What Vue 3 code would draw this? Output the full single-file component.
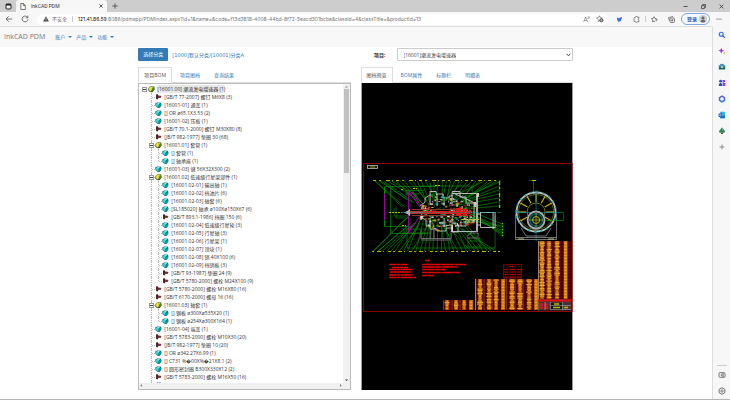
<script setup>
import { ref } from 'vue'

const menus = ['账户', '产品', '功能']
const leftTabs = ['项目BOM', '项目图档', '查询结果']
const rightTabs = ['图档预览', 'BOM属性', '标题栏', '明细表']
const leftTab = ref(0)
const rightTab = ref(0)
const project = ref('16001')

// kind: a = assembly, p = part, s = standard part
const source = [
  [0, 'a', '[16001.00] 潮流发电增速器 (1)'],
  [1, 's', '[GB/T 77-2007] 螺钉 M6X8 (3)'],
  [1, 'p', '[16001-01] 通盖 (1)'],
  [1, 'p', '[] OR ø65.1X3.53 (2)'],
  [1, 'p', '[16001-02] 压板 (1)'],
  [1, 's', '[GB/T 70.1-2000] 螺钉 M30X80 (8)'],
  [1, 's', '[JB/T 982-1977] 垫圈 30 (68)'],
  [1, 'a', '[16001.01] 套管 (1)'],
  [2, 'p', '[] 套管 (1)'],
  [2, 'p', '[] 轴承座 (1)'],
  [1, 'p', '[16001-03] 键 56X32X300 (2)'],
  [1, 'a', '[16001.02] 低速级行星架部件 (1)'],
  [2, 'p', '[16001.02-01] 输出轴 (1)'],
  [2, 'p', '[16001.02-02] 挡油片 (6)'],
  [2, 'p', '[16001.02-03] 轴套 (6)'],
  [2, 'p', '[SL185020] 轴承 ø100Xø150X67 (6)'],
  [2, 's', '[GB/T 893.1-1986] 挡圈 150 (6)'],
  [2, 'p', '[16001.02-04] 低速级行星轮 (3)'],
  [2, 'p', '[16001.02-05] 行星轴 (3)'],
  [2, 'p', '[16001.02-06] 行星架 (1)'],
  [2, 'p', '[16001.02-07] 顶块 (1)'],
  [2, 'p', '[16001.02-08] 销 40X100 (6)'],
  [2, 'p', '[16001.02-09] 挡销板 (3)'],
  [2, 's', '[GB/T 93-1987] 垫圈 24 (9)'],
  [2, 's', '[GB/T 5780-2000] 螺栓 M24X100 (9)'],
  [1, 's', '[GB/T 5780-2000] 螺栓 M16X80 (16)'],
  [1, 's', '[GB/T 6170-2000] 螺母 16 (16)'],
  [1, 'a', '[16001.03] 轴套 (1)'],
  [2, 'p', '[] 钢板 ø300Xø535X20 (1)'],
  [2, 'p', '[] 钢板 ø254Xø300X164 (1)'],
  [1, 'p', '[16001-04] 端盖 (1)'],
  [1, 's', '[GB/T 5783-2000] 螺栓 M10X30 (20)'],
  [1, 's', '[JB/T 982-1977] 垫圈 10 (20)'],
  [1, 'p', '[] OR ø342.27X6.99 (1)'],
  [1, 'p', '[] C731 %\uFFFD00X%\uFFFD21X8.1 (2)'],
  [1, 'p', '[] 圆形密封圈 B300X330X12 (2)'],
  [1, 's', '[GB/T 5783-2000] 螺栓 M16X50 (16)'],
  [1, 'p', '[] OR ø380X ø400X7.0 (2)'],
]
const rows = source.map(([depth, kind, text], i) => ({
  depth, kind, text,
  last: depth === 2 && (source[i + 1]?.[0] ?? 0) < 2,
}))

// Deterministic noise for the drawing's fine detail
let seed = 7
const rnd = () => ((seed = (seed * 16807) % 2147483647) / 2147483647)
const between = (a, b) => +(a + rnd() * (b - a)).toFixed(1)

const fan = []
for (let i = 0; i < 30; i++) {
  const x = 375 + i * 4.2
  fan.push(`M${x} 181L${(436 + (x - 436) * 0.45 + between(-4, 4)).toFixed(1)} ${between(196, 208)}`)
  fan.push(`M${x - 1} 251L${(436 + (x - 436) * 0.48 + between(-4, 4)).toFixed(1)} ${between(216, 230)}`)
}
for (let i = 0; i < 7; i++) {
  fan.push(`M499 ${182 + i * 4}L${between(452, 468)} ${198 + i * 2}`)
  fan.push(`M502 ${224 + i * 2}L${between(462, 474)} ${between(212, 220)}`)
}
const fanPath = fan.join('')

const bits = []
const bitColors = ['#e8e8e8', '#ff3030', '#d8d8d8', '#20b020', '#c02020', '#18b8b8', '#b07830', '#ffffff', '#d8d020']
for (let i = 0; i < 260; i++) {
  const x = between(419, 474)
  const spread = x < 428 ? 7 : x < 445 ? 18 : x < 462 ? 14 : 12
  bits.push({ x, y: between(212 - spread, 212 + spread), w: between(1, 3), h: between(0.6, 2), c: bitColors[i % 9] })
}

const tables = [
  { x: 538, y: 241, w: 33, h: 58, cols: [3, 10, 18, 26.5] },
  { x: 475, y: 279, w: 31, h: 31, cols: [4, 13, 20, 27] },
  { x: 506, y: 279, w: 31, h: 31, cols: [5, 13, 22, 29] },
  { x: 443, y: 300, w: 31, h: 10, cols: [3, 12, 20, 27] },
]
for (const t of tables) {
  t.marks = []
  t.cols.forEach((c, k) => {
    for (let y = 0.6; y < t.h - 1; y += 1.5) {
      const w = k === 3 ? 3 : between(1, 6)
      t.marks.push({ x: t.x + c + 1 - w / 2, y: t.y + y, w })
    }
  })
  t.lines = Array.from({ length: Math.floor(t.h / 3) }, (_, i) => `M${t.x} ${t.y + 2 + i * 3}h${t.w}`).join('')
}

const spokes = Array.from({ length: 12 }, (_, i) => {
  const a = (i * Math.PI) / 6
  const p = (r) => `${(536 + r * Math.cos(a)).toFixed(1)} ${(212 + r * Math.sin(a)).toFixed(1)}`
  return { d: `M${p(10)}L${p(18)}` }
}).filter((_, i) => i < 2 || i > 4)
</script>

<template>
  <div class="browser">
    <header class="titlebar">
      <button class="bare workspace" aria-label="工作区">
        <svg width="7" height="7" viewBox="0 0 7 7"><rect x="1" y="1" width="5" height="5" rx="1" fill="#eee" stroke="#222" /><path d="M1 1.7h5" stroke="#222" stroke-width="1.6" /></svg>
      </button>
      <div class="page-tab">
        <svg width="6" height="7" viewBox="0 0 6 7"><path d="M.8.5h2.6l1.9 2v4H.8zM3.3.6v2h2" fill="#fff" stroke="#444" stroke-width=".7" /></svg>
        <span class="page-title">InkCAD PDM</span>
        <button class="bare" aria-label="关闭标签页"><svg width="4" height="4" viewBox="0 0 4 4"><path d="M.4.4l3.2 3.2M3.6.4L.4 3.6" stroke="#333" stroke-width=".8" /></svg></button>
      </div>
      <button class="bare new-tab" aria-label="新建标签页"><svg width="6" height="6" viewBox="0 0 6 6"><path d="M3 .3v5.4M.3 3h5.4" stroke="#444" stroke-width=".8" /></svg></button>
      <div class="window-buttons">
        <button class="bare" aria-label="最小化"><svg width="5" height="5" viewBox="0 0 5 5"><path d="M.5 2.5h4" stroke="#333" stroke-width=".8" /></svg></button>
        <button class="bare" aria-label="还原"><svg width="5" height="5" viewBox="0 0 5 5"><path d="M.5 1.6h2.9v2.9H.5zM1.6 1.4V.5h2.9v2.9h-.9" fill="none" stroke="#333" stroke-width=".7" /></svg></button>
        <button class="bare" aria-label="关闭"><svg width="5" height="5" viewBox="0 0 5 5"><path d="M.6.6l3.8 3.8M4.4.6L.6 4.4" stroke="#333" stroke-width=".8" /></svg></button>
      </div>
    </header>

    <div class="toolbar">
      <button class="bare" aria-label="后退"><svg width="8" height="8" viewBox="0 0 8 8"><path d="M7.2 4H1M3.7 1.3L1 4l2.7 2.7" fill="none" stroke="#555" stroke-width=".8" /></svg></button>
      <button class="bare" aria-label="刷新"><svg width="8" height="8" viewBox="0 0 8 8"><path d="M6.6 2.6A2.9 2.9 0 1 0 6.9 4.4M6.8.8v2h-2" fill="none" stroke="#555" stroke-width=".8" /></svg></button>
      <div class="address">
        <svg width="6" height="6" viewBox="0 0 6 6"><path d="M3 .3L5.9 5.6H.1z" fill="#444" /><path d="M3 2v2M3 4.4v.7" stroke="#fff" stroke-width=".6" /></svg>
        <span class="insecure">不安全</span>
        <i class="bar"></i>
        <span class="url"><b>121.41.86.59</b>:8086/pdmapp/PDMIndex.aspx?id=1&amp;name=&amp;code=f13d3818-4008-44bd-8f72-5eacd301bcbe&amp;classId=4&amp;classTitle=&amp;productId=13</span>
        <button class="bare" aria-label="大声朗读"><svg width="7" height="7" viewBox="0 0 7 7"><path d="M.6 6L2.7 1 4.8 6M1.3 4.4h2.8M4.8.6q1 .9 0 2M5.7.2q1.3 1.3 0 2.7" fill="none" stroke="#666" stroke-width=".6" /></svg></button>
        <button class="bare" aria-label="收藏"><svg width="8" height="8" viewBox="0 0 8 8"><path d="M3.5.8l.9 1.9 2.1.3M2.6 4.500l-.4 2 1.5-.8M2.6 2.7L.5 3 2 4.5M3.5.8L2.6 2.7" fill="none" stroke="#555" stroke-width=".6" /><circle cx="5.4" cy="5.3" r="2" fill="#555" /><path d="M5.4 4.2v2.2M4.3 5.3h2.2" stroke="#fff" stroke-width=".5" /></svg></button>
      </div>
      <div class="tools">
        <button class="bare" aria-label="扩展"><svg width="7" height="7" viewBox="0 0 7 7"><path d="M.8 1.4L3 2.3 5.9.8 4.8 5 2.6 5.9 1.2 4z" fill="#3b6cf6" /><path d="M4.3 1.8l1.8-.6-1 1.8z" fill="#a04df0" /></svg></button>
        <button class="bare" aria-label="插件"><svg width="7" height="7" viewBox="0 0 7 7"><path d="M6 2.5V1.3H4.5a1 1 0 0 0-2 0H2A1 1 0 0 0 1 2.3v2.4a1 1 0 0 0 1 1h.6a1 1 0 0 0 1.9 0H6V4.4a1 1 0 0 1 0-1.9z" fill="none" stroke="#555" stroke-width=".7" /></svg></button>
        <i class="bar"></i>
        <button class="bare" aria-label="收藏夹"><svg width="7" height="7" viewBox="0 0 7 7"><path d="M3 .7l.8 1.7 1.8.2M3 .7l-.8 1.7-1.8.3 1.4 1.3-.4 1.9L3 5l1 .8M4.5 3.500h2M4.5 4.8h1.7" fill="none" stroke="#555" stroke-width=".7" /></svg></button>
        <button class="bare" aria-label="集锦"><svg width="7" height="7" viewBox="0 0 7 7"><rect x="2" y="2" width="4.5" height="4.5" rx="1" fill="none" stroke="#555" stroke-width=".7" /><path d="M1.4 4.8L.6 1.6 4.6.6l.3.8M4.25 3v2.5M3 4.25h2.5" fill="none" stroke="#555" stroke-width=".7" /></svg></button>
        <button class="login">登录
          <svg width="8" height="8" viewBox="0 0 8 8"><circle cx="4" cy="4" r="4" fill="#cfcfcf" /><circle cx="4" cy="3" r="1.6" fill="#666" /><path d="M1.5 6.8q0-2 2.5-2t2.5 2q-2.5 1.6-5 0z" fill="#666" /></svg>
        </button>
        <button class="bare more" aria-label="设置及其他"><svg width="6" height="2" viewBox="0 0 6 2"><circle cx="1" cy="1" r=".6" fill="#333" /><circle cx="3" cy="1" r=".6" fill="#333" /><circle cx="5" cy="1" r=".6" fill="#333" /></svg></button>
      </div>
    </div>

    <div class="stage">
      <main class="page">
        <nav class="navbar">
          <a class="brand" href="#">InkCAD PDM</a>
          <a v-for="m in menus" :key="m" class="menu" href="#">{{ m }}<i class="caret"></i></a>
        </nav>

        <div class="container">
          <section class="pane">
            <div class="head">
              <button class="primary">选择分类</button>
              <a class="category" href="#">[1000]默认分类/[10001]分类A</a>
            </div>
            <div class="tabs" role="tablist">
              <button v-for="(t, i) in leftTabs" :key="t" role="tab" :class="['tab', { active: leftTab === i }]" @click="leftTab = i">{{ t }}</button>
            </div>
            <div class="tree-box">
              <div class="tree-main">
                <ul class="tree">
                  <li v-for="(r, i) in rows" :key="i" class="row">
                    <i v-if="r.depth > 0" class="cell"></i>
                    <i v-if="r.depth > 1" class="cell guide"></i>
                    <i :class="['cell', { elbow: r.depth > 0, end: r.last, guide: r.depth > 0 && !r.last }]">
                      <span v-if="r.kind === 'a'" class="toggle"></span>
                    </i>
                    <svg v-if="r.kind === 'a'" class="icon" width="7" height="7" viewBox="0 0 7 7"><path d="M.3 1.9L2.5.2l3.800.4.3 2.900-2 2.700-2.800-.2L.3 4.2z" fill="#4c5310" /><path d="M.7 2l2-1.500 2.200.6-.6 1.800-1.500 2.700-1.900-1.300z" fill="#e8e12c" /><path d="M3.800 2.700l2.300-1 .1 1.900-1.500 2z" fill="#2c8a5d" /><path d="M3.800 1l2-.2-.6 1.200z" fill="#62d8dc" /></svg>
                    <svg v-else-if="r.kind === 'p'" class="icon" width="7" height="7" viewBox="0 0 7 7"><path d="M.2 1.600L2.200.5l3.900.2.4 2.500-1.600 2.500-2.200.3L.6 4.300z" fill="#0c6a70" /><path d="M.5 1.900l1.800-.9 3.200.2-1.800 1.400-.3 2.600-.9.2L.9 4z" fill="#2ccfd2" /><path d="M4 2.900l2-1.200.1 1.400-1.600 2.100-.8.2z" fill="#12969c" /><path d="M2.200 1.700l1.500-.4 1 .2-1.900.9z" fill="#c8fafa" /></svg>
                    <svg v-else class="icon" width="7" height="7" viewBox="0 0 7 7"><path d="M1 .6l1.600-.4.6.9v3.700l-1 .7L1 4.800z" fill="#5b2226" /><path d="M3 1.600l2.700.2.5.6-.3 1.400L3 3.900z" fill="#8d3238" /><path d="M1.400 1l.9-.2v3.600l-.9-.2z" fill="#413044" /><path d="M3 2.900h3" stroke="#45272b" stroke-width=".6" /></svg>
                    <span :class="['label', { selected: i === 0 }]">{{ r.text }}</span>
                  </li>
                </ul>
                <div class="vscroll">
                  <svg width="7" height="5" viewBox="0 0 7 5"><path d="M2 3.5L3.5 2 5 3.5z" fill="#888" /></svg>
                  <div class="thumb"></div>
                  <svg width="7" height="5" viewBox="0 0 7 5"><path d="M2 1.5L3.5 3 5 1.5z" fill="#333" /></svg>
                </div>
              </div>
              <div class="hscroll">
                <svg width="5" height="5" viewBox="0 0 5 5"><path d="M3 1L1.500 2.5 3 4z" fill="#777" /></svg>
                <svg width="5" height="5" viewBox="0 0 5 5"><path d="M2 1l1.500 1.5L2 4z" fill="#777" /></svg>
              </div>
            </div>
          </section>

          <section class="pane">
            <div class="head">
              <label class="project-label" for="project">项目:</label>
              <div class="select-wrap">
                <select id="project" v-model="project"><option value="16001">[16001]潮流发电增速器</option></select>
                <svg class="chevron" width="5" height="4" viewBox="0 0 5 4"><path d="M.6.8l1.9 2 1.9-2" fill="none" stroke="#333" stroke-width=".9" /></svg>
              </div>
            </div>
            <div class="tabs" role="tablist">
              <button v-for="(t, i) in rightTabs" :key="t" role="tab" :class="['tab', { active: rightTab === i }]" @click="rightTab = i">{{ t }}</button>
            </div>
            <div class="viewer">
              <svg class="drawing" viewBox="361 83 212 307" role="img" aria-label="图档预览">
                <rect x="363.5" y="163.5" width="208.5" height="148" fill="none" stroke="#8d0000" />
                <rect x="367.5" y="165.5" width="10" height="3" fill="#111" stroke="#bbb" stroke-width=".8" />
                <path d="M370 167h5" stroke="#b9b900" stroke-width=".8" />

                <g fill="none" stroke="#009400" stroke-width=".65">
                  <path :d="fanPath" />
                  <path d="M384.5 186.5H436M384.5 186.5V226.5H412M390.5 188V233.5H428M394 208V216H408M396 206.5V218H408M407 233V248H495M495 216V248M407 190V196M378 251L412 222M373 251L409 216M375 181L402 207M381 181L407 200M420 186H472V196" />
                  <path d="M405 190.5H424M405 194H420M402 229H425M402 233H430M468 238V247H480V238M470 241H478M499.5 180V208M502.5 223V237" />
                </g>
                <path d="M384.5 187V226M408.5 191.5V233M408.5 191.5L420 207M412 191.5L421 206M408.5 232L420 216" stroke="#a400a4" stroke-width="1" fill="none" />
                <path d="M384.5 187V194M384.5 220V226" stroke="#009300" />
                <path d="M373 180.5H500" stroke="#b6b600" stroke-dasharray="3 3 2 5 4 2 1 3" />
                <path d="M372 251.5H503" stroke="#b6b600" stroke-dasharray="2 3 4 2 1 4 3 2" />
                <path d="M499.5 181V208" stroke="#a0b800" stroke-width="1.3" stroke-dasharray="4 2 2 4" />
                <path d="M502.5 223V238" stroke="#70b800" stroke-width="1.3" stroke-dasharray="1 2" />
                <path d="M389 212.5H402M435 185.5H440M401 189.5H404M402 225.5H406M413 188.5H417" stroke="#bcbc00" stroke-width="1" stroke-dasharray="2 1" />

                <g fill="none" stroke="#c9c9c9" stroke-width=".9">
                  <path d="M420 206L425 202V198L430 195V191.5H436V194H443V198H449V196H452V191.5H460V197H466V203H474V220H466V226H458V232H452V228H446V231H437V229H430V226H426V220L420 217" />
                  <path d="M452 193.5H476.5V231.5H452M477.5 193V232M453 193L477 204M430 196V205M437 194V206M444 199V206M444 218V226M430 218V228M452 195V206M452 218V230" />
                  <path d="M421 230V238.5H451V231M421 240H451M430 226V238M434 226V238M467 238H480M470 233H478V237M467 236L472 232" stroke="#777" />
                  <rect x="480.5" y="212.5" width="14.5" height="15" /><path d="M493 212V229M477 214H481M477 225H481" />
                </g>
                <rect v-for="(b, i) in bits" :key="i" :x="b.x" :y="b.y" :width="b.w" :height="b.h" :fill="b.c" opacity=".75" />
                <path d="M407 212.5H425" stroke="#b23b36" stroke-width="3" /><path d="M404 212.5L408 210.5L410 208.5V216.5L408 214.5z" fill="#c9a9b9" />
                <path d="M412 209.5H430M412 215.5H430" stroke="#913128" />
                <path d="M425 212.5H470" stroke="#d91818" stroke-width="3" /><path d="M430 209.5H468M430 215.5H468" stroke="#7d3b28" />
                <path d="M456 208h5v8h-5zM463 209h4v7h-4z" fill="#e51616" />
                <path d="M401 212.5H501" stroke="#00a0a0" stroke-width=".5" stroke-dasharray="6 2" />
                <path d="M461 219.5H479M463 222H475" stroke="#c9ca20" stroke-dasharray="3 1" /><path d="M452 225V232M478 193V197M475 202V207" stroke="#f3dce0" stroke-width="1.5" />

                <path d="M533.5 181V195M529 180.5H536" stroke="#008b00" stroke-width=".8" />
                <path d="M532 180.5H536" stroke="#b8c800" />
                <circle cx="536" cy="212" r="19.5" fill="none" stroke="#bdbdbd" stroke-width="1.8" />
                <circle cx="536" cy="212" r="20" fill="none" stroke="#00a9b0" stroke-width="1.5" stroke-dasharray="1.8 4.48" />
                <circle cx="536" cy="212" r="17.5" fill="none" stroke="#8d9c24" stroke-width=".6" />
                <circle cx="536" cy="212" r="9" fill="none" stroke="#aaa315" stroke-width=".7" />
                <path v-for="(s, i) in spokes" :key="i" :d="s.d" stroke="#c9be16" stroke-width="1.1" />
                <path d="M536 190V241M515 212.5H557" stroke="#009ea5" stroke-width=".6" />
                <circle cx="536" cy="220" r="8.5" fill="#001818" stroke="#a9a9a9" stroke-width="1.8" />
                <circle cx="536" cy="220" r="6.3" fill="none" stroke="#087f8d" stroke-width="1" />
                <circle cx="536" cy="220" r="3.5" fill="none" stroke="#baac17" stroke-width="1" />
                <path d="M529 220H543M536 213V227" stroke="#bbb51c" stroke-width=".7" />
                <path d="M515.5 214V239.5H556.5V214M515 237.5H557M521 228L526 236H546L551 228" fill="none" stroke="#8f8f8f" stroke-width=".8" />
                <path d="M518 239H524M548 239H554" stroke="#b8b87c" />
                <path d="M557 212.5H563.5V220.5H546" fill="none" stroke="#008b00" stroke-width=".7" />

                <g stroke="#e60000" stroke-width="1.4">
                  <path d="M389 264.5H407M392 267.5H408M389 269.5H413M390 272H411M389 275H413M389 277.5H416" stroke-dasharray="7 .3 4 .4" />
                  <path d="M425 260.5H429M422 264.5H466M422 267H457M422 269.5H445M422 272.5H460M422 275.5H434" stroke-dasharray="5 .4 8 .3" />
                </g>
                <rect x="503.5" y="264.5" width="18" height="13.5" fill="#180000" stroke="#a30000" stroke-width=".7" />
                <path d="M509 266.5H514M504 269.5H521M504 272H521M504 274.5H521M504 277H521" stroke="#c30000" stroke-width=".9" stroke-dasharray="4 2 6 1" />

                <g v-for="t in tables" :key="t.x">
                  <rect :x="t.x" :y="t.y" :width="t.w" :height="t.h" fill="#420000" />
                  <rect v-for="c in t.cols" :key="c" :x="t.x + c - 1" :y="t.y" width="4" :height="t.h" fill="#b05200" />
                  <path :d="t.lines" stroke="#8b1600" stroke-width=".5" />
                  <rect v-for="(m, i) in t.marks" :key="i" :x="m.x" :y="m.y" :width="m.w" height="1" fill="#eeb024" />
                  <path :d="`M${t.x + .4} ${t.y}v${t.h}M${t.x + 9} ${t.y}v${t.h}M${t.x + 17} ${t.y}v${t.h}`" stroke="#a74b35" stroke-width=".6" />
                </g>
                <path d="M538.5 241V310.5M475.5 279V310" stroke="#b99a8f" stroke-width=".8" />
                <rect x="538.5" y="299" width="33" height="11.5" fill="#4b3333" />
                <path d="M538 300.5H571" stroke="#e50c0c" stroke-width="2" />
                <path d="M539 304.5H550M539 307.5H549" stroke="#c51c28" stroke-width="2.3" stroke-dasharray="4 1" />
                <rect x="550" y="303" width="12" height="7" fill="#101010" />
                <path d="M551 305.5H571M551 309.5H571M562.5 302V310M550.5 302V310M545 302V310" stroke="#999" stroke-width=".7" />
                <path d="M553 307.5H560M554 304H559M564 307.5H568" stroke="#bdbf00" stroke-width="1.3" />
              </svg>
            </div>
          </section>
        </div>
      </main>

      <aside class="sidebar">
        <button class="bare" aria-label="搜索"><svg width="8" height="8" viewBox="0 0 8 8"><circle cx="3.2" cy="3.2" r="2" fill="#d6ecff" stroke="#2677d9" stroke-width="1.1" /><path d="M4.7 4.7l2.2 2.2" stroke="#5540c8" stroke-width="1.2" /></svg></button>
        <button class="bare" aria-label="发现"><svg width="8" height="8" viewBox="0 0 8 8"><path d="M3.3.8l.8 2 2.2.9-2.2.8-.8 2.2-.9-2.2L.5 3.7l1.9-.9z" fill="#a334ef" /><path d="M6.2 4.8l.4 1 .9.3-.9.4-.4.9-.4-.9-.9-.4.9-.3z" fill="#f0a51d" /></svg></button>
        <button class="bare" aria-label="工具"><svg width="8" height="8" viewBox="0 0 8 8"><path d="M2.6 2.300V1.400h2.800v.9" fill="none" stroke="#165a96" stroke-width=".8" /><rect x=".8" y="2.200" width="6.4" height="2" fill="#1c91cf" /><rect x=".8" y="4.100" width="6.4" height="2.400" fill="#176b78" /><path d="M3 3.300h2v1.600H3z" fill="#f2ca35" /></svg></button>
        <button class="bare" aria-label="游戏"><svg width="8" height="8" viewBox="0 0 8 8"><circle cx="2.6" cy="2.2" r="1.4" fill="#1e4fc0" /><path d="M.8 7q0-3 1.8-3t1.9 3z" fill="#1e4fc0" /><path d="M4.4 1h2.8v2H5.8v1h1.6v3H4.9z" fill="#933fe2" /></svg></button>
        <button class="bare" aria-label="Microsoft 365"><svg width="8" height="8" viewBox="0 0 8 8"><path d="M4 1.200l2.400 1.400v2.800L4 6.800 1.600 5.400V2.600z" fill="none" stroke="#5363db" stroke-width="1.5" /><path d="M1.6 5.4L4 6.8l2.400-1.400" fill="none" stroke="#2e96e6" stroke-width="1.300" /></svg></button>
        <button class="bare" aria-label="Outlook"><svg width="8" height="8" viewBox="0 0 8 8"><rect x="2" y=".8" width="5" height="6.4" rx=".7" fill="#34b0ed" /><path d="M2 4l2.6 1.5L7 4v3.2H2z" fill="#1675c6" /><rect x=".6" y="2.4" width="3.7" height="3.7" rx=".5" fill="#0e62b5" /><circle cx="2.45" cy="4.25" r=".9" fill="none" stroke="#fff" stroke-width=".5" /></svg></button>
        <button class="bare" aria-label="树"><svg width="8" height="8" viewBox="0 0 8 8"><path d="M4 .6l1.7 2L7 4.3l-.5 1.5h-5L1 4.3l1.3-1.7z" fill="#28885b" /><path d="M4 .6l1.7 2L4 4z" fill="#54b480" /><path d="M3 5.8h2v1.3H3z" fill="#7c4428" /></svg></button>
        <button class="bare" aria-label="添加"><svg width="8" height="8" viewBox="0 0 8 8"><path d="M4 1.5v5M1.5 4h5" stroke="#777" stroke-width=".8" /></svg></button>
        <span class="spacer"></span>
        <i class="rule"></i>
        <button class="bare" aria-label="截图"><svg width="8" height="8" viewBox="0 0 8 8"><rect x="1" y="1.7" width="6" height="4.6" rx=".8" fill="none" stroke="#555" stroke-width=".8" /><path d="M4.8 2.7L2.9 4l1.9 1.3M5.2 2v4" fill="none" stroke="#555" stroke-width=".7" /></svg></button>
        <button class="bare" aria-label="设置"><svg width="8" height="8" viewBox="0 0 8 8"><path d="M4 .7l2.900 1.650v3.300L4 7.300 1.100 5.650v-3.300z" fill="none" stroke="#555" stroke-width=".8" stroke-linejoin="round" /><circle cx="4" cy="4" r="1.2" fill="none" stroke="#555" stroke-width=".7" /></svg></button>
      </aside>
    </div>
  </div>
</template>

<style>
body { margin: 0; background: #fff; }
</style>

<style scoped>
.browser { display: flex; flex-direction: column; height: 100vh; box-sizing: border-box; border-bottom: 1px solid #b5b5b5; font: 5px/8px "Open Sans", "Noto Sans CJK SC", sans-serif; color: #333; overflow: hidden; }
svg { display: block; flex: none; }
button, select { font: inherit; margin: 0; }
a { color: #337ab7; text-decoration: none; }
.bare { display: flex; align-items: center; justify-content: center; padding: 0; border: 0; background: none; }

.titlebar { display: flex; align-items: center; height: 12px; flex: none; background: #cdcdcd; }
.workspace { width: 16px; }
.page-tab { display: flex; align-items: center; gap: 5px; width: 83px; height: 12px; padding: 0 4px; background: #f7f7f7; border-radius: 3px 3px 0 0; }
.page-title { flex: 1; font-family: Roboto, sans-serif; }
.new-tab { margin-left: 5px; }
.window-buttons { display: flex; gap: 13px; margin-left: auto; padding-right: 6px; }

.toolbar { display: flex; align-items: center; gap: 8px; height: 14px; flex: none; padding: 0 8px 0 5px; background: #f7f7f7; }
.address { display: flex; align-items: center; flex: 1; gap: 3px; height: 11px; padding: 0 4px 0 6px; background: #fff; border-radius: 6px; }
.insecure { color: #666; }
.bar { width: 1px; height: 6px; margin: 0 2px; background: #ccc; }
.url { flex: 1; color: #777; font-family: Inter, sans-serif; white-space: nowrap; overflow: hidden; }
.url b { font-weight: 400; color: #111; }
.address .bare { margin-left: 3px; }
.tools { display: flex; align-items: center; gap: 10px; }
.tools .bar { margin: 0 -5px; }
.login { display: flex; align-items: center; gap: 2px; height: 12px; margin-left: -4px; padding: 0 2px 0 5px; border: 1px solid #82a9dc; border-radius: 6px; background: #f3f8ff; color: #2362b3; font-weight: 700; }
.tools .login { margin-left: -4px; }
.tools .more { margin-left: -4px; }

.stage { display: flex; flex: 1; min-height: 0; background: #f7f7f7; }
.page { display: flex; flex-direction: column; flex: 1; min-width: 0; background: #fff; border-top: 1px solid #ddd; border-right: 1px solid #ddd; border-top-right-radius: 2px; }
.navbar { display: flex; align-items: center; gap: 4px; height: 20px; flex: none; padding: 0 4px; background: #f8f8f8; }
.brand { margin-right: 6px; color: #777; font-size: 7px; }
.menu { display: flex; align-items: center; gap: 3px; }
.caret { border: 2px solid transparent; border-top-color: #337ab7; border-bottom: 0; width: 0; }

.container { display: flex; gap: 10px; flex: 1; min-height: 0; width: 61%; margin: 1px auto 0; padding: 0 1px 9px 0; }
.pane { display: flex; flex-direction: column; flex: 1; min-width: 0; }
.head { display: flex; align-items: center; gap: 4px; height: 13px; flex: none; margin-bottom: 6px; }
.primary { height: 13px; padding: 0 5px; border: 0; border-radius: 1px; background: #337ab7; color: #fff; line-height: 13px; }
.category { font-family: "DejaVu Sans", "Noto Sans CJK SC", sans-serif; }
.project-label { width: 25px; padding-right: 7px; text-align: right; font-weight: 700; }
.select-wrap { position: relative; flex: 1; }
.select-wrap select { display: block; width: 100%; height: 13px; padding: 0 6px; border: 1px solid #ccc; border-radius: 1px; background: #fff; color: #444; appearance: none; }
.chevron { position: absolute; right: 2px; top: 5px; }

.tabs { display: flex; gap: 2px; height: 16px; flex: none; border-bottom: 1px solid #ddd; box-sizing: border-box; }
.tab { height: 16px; padding: 0 5px; border: 1px solid transparent; border-radius: 1px 1px 0 0; background: none; color: #337ab7; line-height: 14px; }
.tab.active { border-color: #ddd; border-bottom-color: #fff; background: #fff; color: #555; }

.tree-box { display: flex; flex-direction: column; flex: 1; min-height: 0; border: 1px solid #bbb; }
.tree-main { display: flex; flex: 1; min-height: 0; }
.tree { flex: 1; min-width: 0; margin: 0; padding: 1px 2px; list-style: none; overflow: hidden; }
.row { display: flex; align-items: center; height: 8px; white-space: nowrap; }
.cell { position: relative; flex: none; width: 7px; height: 8px; }
.guide::before { content: ""; position: absolute; left: 3px; top: 0; bottom: 0; border-left: 1px dotted #bbb; }
.end::before { content: ""; position: absolute; left: 3px; top: 0; height: 4px; border-left: 1px dotted #bbb; }
.elbow::after { content: ""; position: absolute; left: 4px; right: 0; top: 4px; border-top: 1px dotted #bbb; }
.toggle { position: absolute; z-index: 1; left: 1px; top: 2px; width: 3px; height: 3px; border: 1px solid #999; background: linear-gradient(#444, #444) center / 3px 1px no-repeat #fff; }
.icon { margin-right: 2px; }
.label { color: #333; }
.label.selected { background: #e7e7e7; }
.vscroll { display: flex; flex-direction: column; width: 7px; background: #f1f1f1; }
.thumb { flex: 0 0 28%; margin: 0 1px auto; background: #c1c1c1; }
.hscroll { display: flex; justify-content: space-between; height: 6px; flex: none; padding-right: 7px; background: #f0f0f0; }
.viewer { flex: 1; min-height: 0; background: #000; box-shadow: inset 1px 0 #999, inset -1px 0 #999; }
.drawing { width: 100%; height: 100%; }

.sidebar { display: flex; flex-direction: column; align-items: center; gap: 8px; width: 17px; flex: none; padding: 5px 0 4px; box-sizing: border-box; }
.spacer { flex: 1; }
.rule { width: 10px; height: 1px; margin-bottom: -3px; background: #ccc; }
</style>
